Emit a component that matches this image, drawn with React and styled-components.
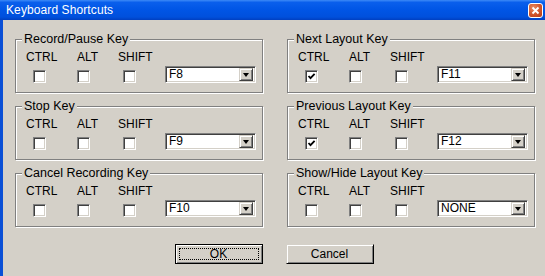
import React from "react";
import styled, { createGlobalStyle } from "styled-components";

const GlobalStyle = createGlobalStyle`
  html, body {
    margin: 0;
    padding: 0;
    background: #d4d0c8;
  }
  body {
    font-family: "Liberation Sans", Arial, sans-serif;
    font-size: 12px;
    color: #000;
  }
`;

const Window = styled.div`
  width: 545px;
  height: 276px;
  overflow: hidden;
  display: flex;
  flex-direction: column;
  background: #d4d0c8;
`;

const TitleBar = styled.div`
  height: 20px;
  flex: none;
  display: flex;
  align-items: center;
  justify-content: space-between;
  padding: 0 2px 0 6px;
  background: linear-gradient(
    to bottom,
    #3d8af7 0%,
    #0a5fec 12%,
    #0055e5 50%,
    #0050dc 85%,
    #003fc0 100%
  );
  color: #fff;
  font-size: 12px;
  letter-spacing: 0.1px;
`;

const CloseButton = styled.div`
  width: 15px;
  height: 15px;
  box-sizing: border-box;
  margin-top: 1px;
  border: 1px solid #fff;
  border-radius: 3px;
  background: radial-gradient(circle at 35% 30%, #e88a62 0%, #d0542a 55%, #b03a16 100%);
  display: flex;
  align-items: center;
  justify-content: center;
`;

const Body = styled.div`
  flex: 1;
  display: flex;
  border-left: 3px solid #0a4fd6;
`;

const Content = styled.div`
  flex: 1;
  display: flex;
  flex-direction: column;
  padding: 19px 0 0 12px;
`;

const Columns = styled.div`
  display: grid;
  grid-template-columns: 249px 249px;
  column-gap: 23px;
`;

const Column = styled.div`
  display: flex;
  flex-direction: column;
  gap: 13px;
`;

const Group = styled.div`
  position: relative;
  width: 248px;
  height: 54px;
  box-sizing: border-box;
  border: 1px solid #808080;
  box-shadow: inset 1px 1px 0 #fff, 1px 1px 0 #fff;
  padding: 10px 0 0 10px;
`;

const Legend = styled.span`
  position: absolute;
  top: -8px;
  left: 6px;
  padding: 0 2px;
  background: #d4d0c8;
  font-size: 12.5px;
  line-height: 14px;
  white-space: nowrap;
`;

const Row = styled.div`
  display: grid;
  grid-template-columns: 51px 41px 47px auto;
  align-items: start;
`;

const Option = styled.div`
  display: flex;
  flex-direction: column;
`;

const OptionLabel = styled.span`
  font-size: 12px;
  line-height: 14px;
  white-space: nowrap;
`;

const Box = styled.span`
  width: 13px;
  height: 13px;
  box-sizing: border-box;
  margin: 6px 0 0 ${(p) => p.$indent}px;
  background: #fff;
  border-top: 1px solid #808080;
  border-left: 1px solid #808080;
  border-bottom: 1px solid #fff;
  border-right: 1px solid #fff;
  box-shadow: inset 1px 1px 0 #404040, inset -1px -1px 0 #d4d0c8;
  display: flex;
  align-items: center;
  justify-content: center;
`;

const Select = styled.div`
  width: 91px;
  height: 17px;
  margin-top: 16px;
  box-sizing: border-box;
  background: #fff;
  border-top: 1px solid #808080;
  border-left: 1px solid #808080;
  border-bottom: 1px solid #fff;
  border-right: 1px solid #fff;
  box-shadow: inset 1px 1px 0 #404040, inset -1px -1px 0 #d4d0c8;
  display: flex;
  align-items: center;
  padding: 2px;
`;

const SelectValue = styled.span`
  flex: 1;
  font-size: 12px;
  line-height: 13px;
  padding-left: 1px;
`;

const DropButton = styled.span`
  width: 14px;
  height: 13px;
  box-sizing: border-box;
  background: #d4d0c8;
  border-top: 1px solid #d4d0c8;
  border-left: 1px solid #d4d0c8;
  border-bottom: 1px solid #404040;
  border-right: 1px solid #404040;
  box-shadow: inset 1px 1px 0 #fff, inset -1px -1px 0 #808080;
  display: flex;
  align-items: center;
  justify-content: center;
`;

const Arrow = styled.span`
  width: 0;
  height: 0;
  border-left: 3.5px solid transparent;
  border-right: 3.5px solid transparent;
  border-top: 4px solid #000;
`;

const Buttons = styled.div`
  display: flex;
  justify-content: center;
  gap: 23px;
  margin-top: 17px;
  padding-right: 12px;
`;

const Button = styled.div`
  width: 88px;
  height: 20px;
  box-sizing: border-box;
  background: #d4d0c8;
  border: 1px solid ${(p) => (p.$default ? "#000" : "#d4d0c8")};
  border-right-color: #000;
  border-bottom-color: #000;
  box-shadow: ${(p) =>
    p.$default
      ? "inset 1px 1px 0 #fff, inset -1px -1px 0 #808080"
      : "inset 1px 1px 0 #fff, inset -1px -1px 0 #808080"};
  display: flex;
  align-items: center;
  justify-content: center;
  padding: 2px;
  font-size: 12px;
`;

const FocusRing = styled.span`
  flex: 1;
  align-self: stretch;
  margin: 1px;
  border: 1px dotted #000;
  display: flex;
  align-items: center;
  justify-content: center;
  line-height: 12px;
`;

const Check = () => (
  <svg width="9" height="9" viewBox="0 0 9 9">
    <path d="M1.5 4 L3.5 6.2 L7.6 1.8" fill="none" stroke="#000" strokeWidth="1.8" />
  </svg>
);

const Checkbox = ({ indent, checked }) => (
  <Box $indent={indent}>{checked && <Check />}</Box>
);

const ShortcutGroup = ({ title, value, ctrl }) => (
  <Group>
    <Legend>{title}</Legend>
    <Row>
      <Option>
        <OptionLabel>CTRL</OptionLabel>
        <Checkbox indent={7} checked={ctrl} />
      </Option>
      <Option>
        <OptionLabel>ALT</OptionLabel>
        <Checkbox indent={0} />
      </Option>
      <Option>
        <OptionLabel>SHIFT</OptionLabel>
        <Checkbox indent={5} />
      </Option>
      <Select>
        <SelectValue>{value}</SelectValue>
        <DropButton>
          <Arrow />
        </DropButton>
      </Select>
    </Row>
  </Group>
);

const left = [
  { title: "Record/Pause Key", value: "F8" },
  { title: "Stop Key", value: "F9" },
  { title: "Cancel Recording Key", value: "F10" },
];

const right = [
  { title: "Next Layout Key", value: "F11", ctrl: true },
  { title: "Previous Layout Key", value: "F12", ctrl: true },
  { title: "Show/Hide Layout Key", value: "NONE" },
];

export default function App() {
  return (
    <>
      <GlobalStyle />
      <Window>
        <TitleBar>
          <span>Keyboard Shortcuts</span>
          <CloseButton>
            <svg width="9" height="9" viewBox="0 0 9 9">
              <path d="M1.5 1.5 L7.5 7.5 M7.5 1.5 L1.5 7.5" stroke="#fff" strokeWidth="1.8" />
            </svg>
          </CloseButton>
        </TitleBar>
        <Body>
          <Content>
            <Columns>
              <Column>
                {left.map((g) => (
                  <ShortcutGroup key={g.title} {...g} />
                ))}
              </Column>
              <Column>
                {right.map((g) => (
                  <ShortcutGroup key={g.title} {...g} />
                ))}
              </Column>
            </Columns>
            <Buttons>
              <Button $default>
                <FocusRing>OK</FocusRing>
              </Button>
              <Button>Cancel</Button>
            </Buttons>
          </Content>
        </Body>
      </Window>
    </>
  );
}
